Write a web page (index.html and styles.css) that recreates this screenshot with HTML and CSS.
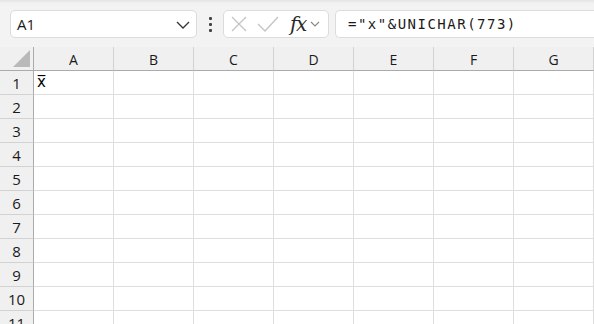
FILE: index.html
```html
<!DOCTYPE html>
<html lang="en">
<head>
    <meta charset="UTF-8">
    <title>Sheet</title>
    <link rel="stylesheet" href="styles.css">
</head>
<body>
    <div class="toolbar">
        <div class="namebox">
            <span>A1</span>
            <svg class="chev" width="14" height="8" viewBox="0 0 14 8"><path d="M1 1 L7 7 L13 1" fill="none" stroke="#333" stroke-width="1.3"/></svg>
        </div>
        <div class="dots"><i></i><i></i><i></i></div>
        <div class="fxbox">
            <svg width="16" height="16" viewBox="0 0 16 16"><path d="M1 1 L15 15 M15 1 L1 15" stroke="#c4c4c4" stroke-width="1.3"/></svg>
            <svg width="22" height="16" viewBox="0 0 22 16"><path d="M1 8 L8 15 L21 1" fill="none" stroke="#c4c4c4" stroke-width="1.3"/></svg>
            <span class="fx">fx</span>
            <svg width="10" height="6" viewBox="0 0 10 6"><path d="M1 1 L5 5 L9 1" fill="none" stroke="#888" stroke-width="1.1"/></svg>
        </div>
        <div class="formula">="x"&amp;UNICHAR(773)</div>
    </div>

    <div class="sheet" id="sheet"></div>

    <script>
        var cols = ["A", "B", "C", "D", "E", "F", "G"];
        var html = '<div class="corner"><div class="tri"></div></div>';
        cols.forEach(function (c) { html += '<div class="colhead">' + c + '</div>'; });
        for (var r = 1; r <= 11; r++) {
            html += '<div class="rowhead">' + r + '</div>';
            cols.forEach(function (c, i) {
                var text = (r === 1 && i === 0) ? 'x&#773;' : '';
                html += '<div class="cell">' + text + '</div>';
            });
        }
        sheet.innerHTML = html;
    </script>
</body>
</html>
```

FILE: styles.css
```css
html, body {
    margin: 0;
    padding: 0;
    overflow: hidden;
    background: #ffffff;
}

body {
    width: 594px;
    height: 324px;
    font-family: "Open Sans", "Noto Sans", sans-serif;
}

.toolbar {
    height: 47px;
    box-sizing: border-box;
    padding: 10px 0 9px 10px;
    display: flex;
    align-items: stretch;
    background: linear-gradient(#e3e3e3 0px, #f1f1f1 3px, #f3f3f3 5px);
}

.namebox {
    width: 187px;
    box-sizing: border-box;
    background: #fff;
    border: 1px solid #dcdcdc;
    border-radius: 5px;
    display: flex;
    align-items: center;
    justify-content: space-between;
    padding: 0 6px 0 6px;
    font-size: 15px;
    color: #1a1a1a;
}

.chev {
    margin-top: 2px;
}

.dots {
    width: 26px;
    display: flex;
    flex-direction: column;
    align-items: center;
    justify-content: center;
    gap: 3px;
}

.dots i {
    width: 3px;
    height: 3px;
    background: #444;
    border-radius: 1px;
}

.fxbox {
    width: 106px;
    box-sizing: border-box;
    background: #fff;
    border: 1px solid #dcdcdc;
    border-radius: 5px;
    display: flex;
    align-items: center;
    padding: 0 5px 0 7px;
    gap: 10px;
}

.fx {
    font-family: "DejaVu Serif", "Liberation Serif", serif;
    font-style: italic;
    font-size: 20px;
    color: #2a2a2a;
    margin-left: 1px;
    margin-right: -6px;
    letter-spacing: -1.5px;
    line-height: 1;
}

.formula {
    flex: 1;
    margin-left: 6px;
    background: #fff;
    border: 1px solid #dcdcdc;
    border-right: none;
    border-radius: 5px 0 0 5px;
    padding-left: 12px;
    display: flex;
    align-items: center;
    font-family: "DejaVu Sans Mono", "Liberation Mono", monospace;
    font-size: 14px;
    letter-spacing: 1.5px;
    color: #1a1a1a;
}

.sheet {
    display: grid;
    grid-template-columns: 34px repeat(7, 80px);
    grid-auto-rows: 24px;
}

.corner,
.colhead,
.rowhead {
    background: #f0f0f0;
    box-sizing: border-box;
    color: #1a1a1a;
    font-size: 14px;
    display: flex;
    align-items: center;
    justify-content: center;
}

.corner {
    border-right: 1px solid #ababab;
    border-bottom: 1px solid #ababab;
    position: relative;
}

.tri {
    position: absolute;
    right: 3px;
    bottom: 3px;
    width: 0;
    height: 0;
    border-left: 17px solid transparent;
    border-bottom: 17px solid #b9b9b9;
}

.colhead {
    border-right: 1px solid #d2d2d2;
    border-bottom: 1px solid #ababab;
    padding-top: 1px;
}

.rowhead {
    border-right: 1px solid #ababab;
    border-bottom: 1px solid #d2d2d2;
    font-size: 15px;
}

.cell {
    box-sizing: border-box;
    border-right: 1px solid #dedede;
    border-bottom: 1px solid #dedede;
    font-family: "DejaVu Sans", sans-serif;
    font-size: 15px;
    padding: 2px 0 0 3px;
    color: #000;
}
```
